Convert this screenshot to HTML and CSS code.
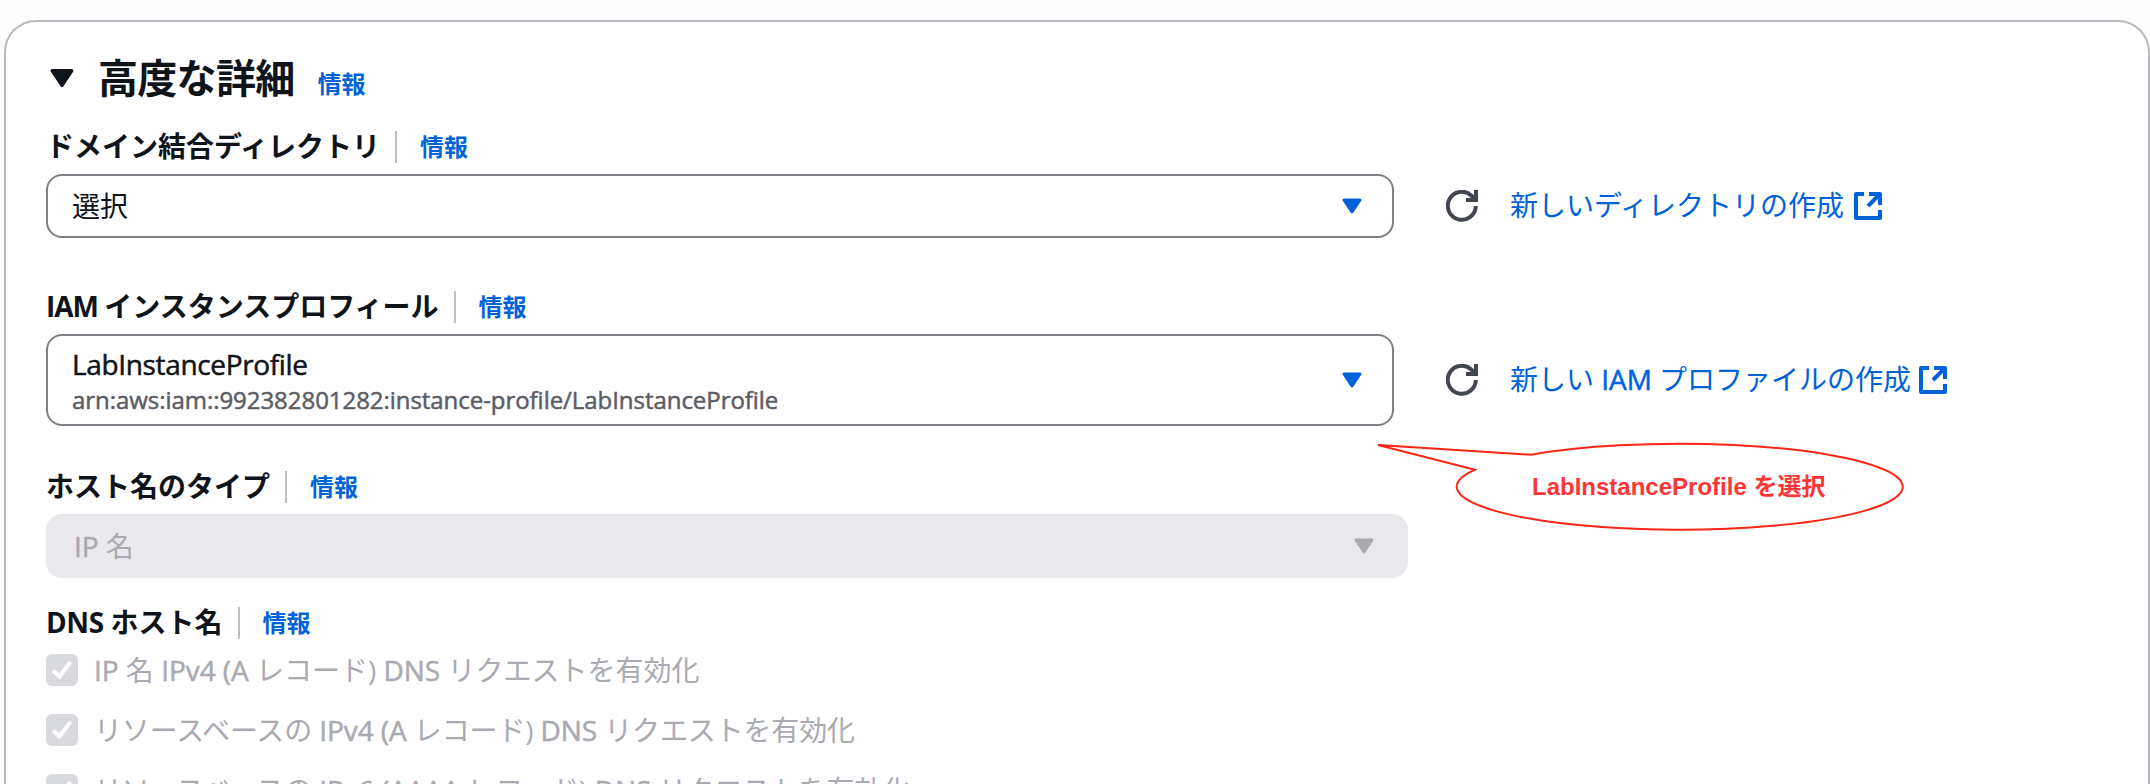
FILE: index.html
```html
<!DOCTYPE html>
<html lang="ja">
<head>
<meta charset="utf-8">
<title>高度な詳細</title>
<link rel="stylesheet" href="styles.css">
</head>
<body>
<svg class="defs" aria-hidden="true">
  <symbol id="caret" viewBox="0 0 20 16"><path d="M2 2h16l-8 12z" fill="currentColor" stroke="currentColor" stroke-width="3" stroke-linejoin="round"/></symbol>
  <symbol id="refresh" viewBox="0 0 16 16"><path d="M14.900 8a7 7 0 1 1-2.400-5.400L15 5M15 0v5h-5" fill="none" stroke="currentColor" stroke-width="2"/></symbol>
  <symbol id="external" viewBox="0 0 28 28"><path d="M10 2H2v24h24v-8M15 2h11v11M26 2L14 14" fill="none" stroke="currentColor" stroke-width="4" stroke-linejoin="round"/></symbol>
  <symbol id="check" viewBox="0 0 32 32"><path d="M7 16.500l6.500 6L24.500 8" fill="none" stroke="currentColor" stroke-width="4"/></symbol>
</svg>
<main class="card">
  <header class="heading">
    <svg class="heading-caret"><use href="#caret"/></svg>
    <h2>高度な詳細</h2>
    <a class="info">情報</a>
  </header>

  <section class="field directory">
    <div class="label"><span class="name">ドメイン結合ディレクトリ</span><a class="info">情報</a></div>
    <div class="row">
      <div class="select"><span>選択</span><svg class="caret"><use href="#caret"/></svg></div>
      <svg class="refresh"><use href="#refresh"/></svg>
      <a class="link"><span>新しいディレクトリの作成</span><svg class="external"><use href="#external"/></svg></a>
    </div>
  </section>

  <section class="field profile">
    <div class="label"><span class="name"><span class="iam">IAM </span>インスタンスプロフィール</span><a class="info">情報</a></div>
    <div class="row">
      <div class="select tall"><div class="option"><span class="option-name">LabInstanceProfile</span><span class="option-arn">arn:aws:iam::992382801282:instance-profile/LabInstanceProfile</span></div><svg class="caret"><use href="#caret"/></svg></div>
      <svg class="refresh"><use href="#refresh"/></svg>
      <a class="link link-profile"><span>新しい <span class="latin">IAM</span> プロファイルの作成</span><svg class="external"><use href="#external"/></svg></a>
    </div>
  </section>

  <section class="field hosttype">
    <div class="label"><span class="name">ホスト名のタイプ</span><a class="info">情報</a></div>
    <div class="select disabled"><span><span class="latin">IP</span> 名</span><svg class="caret"><use href="#caret"/></svg></div>
  </section>

  <section class="field dns">
    <div class="label"><span class="name"><span class="dns-latin">DNS </span>ホスト名</span><a class="info">情報</a></div>
    <div class="checks">
      <div class="check"><svg class="box"><use href="#check"/></svg><span><span class="latin">IP</span> 名 <span class="latin">IPv4 (A</span> レコード) <span class="latin">DNS</span> リクエストを有効化</span></div>
      <div class="check"><svg class="box"><use href="#check"/></svg><span class="resource">リソースベースの <span class="latin">IPv4 (A</span> レコード) <span class="latin">DNS</span> リクエストを有効化</span></div>
      <div class="check"><svg class="box"><use href="#check"/></svg><span><span class="resource">リソースベースの</span> <span class="latin">IPv6 (AAAA</span> レコード) <span class="latin">DNS</span> リクエストを有効化</span></div>
    </div>
  </section>
</main>
<aside class="callout">
  <svg class="bubble" viewBox="0 0 530 92"><path d="M155 12.700 L2 3 L99 27.700 A223 43 0 1 0 155 12.700 Z" fill="#fff" stroke="#ff2414" stroke-width="2"/></svg>
  <span class="callout-text">LabInstanceProfile を選択</span>
</aside>
</body>
</html>
```

FILE: styles.css
```css
* { box-sizing: border-box; }
html, body { margin: 0; height: 784px; overflow: hidden; }
body {
  background: #fcfcfd;
  color: #0f141a;
  font: 28px/40px "Open Sans", "Noto Sans CJK JP", sans-serif;
  padding: 20px 0 0 4px;
  white-space: nowrap;
}
.defs { position: absolute; width: 0; height: 0; }
.card {
  width: 2146px;
  height: 764px;
  overflow: hidden;
  padding: 34px 0 0 40px;
  background: #fff;
  border: 2px solid #b9b9c1;
  border-bottom: 0;
  border-radius: 32px 32px 0 0;
}
.heading { display: flex; height: 48px; align-items: center; }
.heading-caret { width: 24px; height: 20px; margin: -4px 24px 0 4px; }
h2 { margin: -4px 0 0; font-size: 40px; line-height: 48px; font-weight: 700; letter-spacing: -0.7px; }
.info { font-size: 24px; font-weight: 700; color: #0062d9; }
.heading .info { margin: 8px 0 0 23px; }
.label { display: flex; height: 32px; align-items: center; }
.name { font-weight: 700; padding-right: 15px; margin-right: 23px; border-right: 2px solid #bfbfc7; line-height: 30px; height: 32px; }
.iam { letter-spacing: -1px; }
.dns-latin { letter-spacing: -0.4px; }
.latin { letter-spacing: -0.05px; -webkit-text-stroke: 0.5px currentColor; }
.directory { margin-top: 27px; }
.profile { margin-top: 53px; }
.hosttype { margin-top: 45px; }
.dns { margin-top: 29px; }
.row { display: flex; align-items: center; margin-top: 11px; }
.select {
  display: flex;
  align-items: center;
  justify-content: space-between;
  width: 1348px;
  height: 64px;
  padding: 0 30px 0 24px;
  border: 2px solid #7f7f88;
  border-radius: 16px;
}
.tall { height: 92px; }
.caret { width: 20px; height: 16px; color: #0062d9; }
.option { display: flex; flex-direction: column; padding-top: 4px; -webkit-text-stroke: 0.5px currentColor; }
.option-name { line-height: 36px; letter-spacing: -0.35px; }
.option-arn { font-size: 24px; line-height: 36px; letter-spacing: -0.05px; color: #5c5c66; }
.disabled { width: 1362px; margin-top: 11px; padding: 0 34px 0 28px; background: #e9e8ed; border: 0; color: #aaaab2; }
.disabled .caret { color: #aaabb0; }
.refresh { width: 32px; height: 32px; margin-left: 52px; color: #424650; }
.link { display: flex; align-items: center; margin-left: 32px; color: #0062d9; }
.link > span { margin-top: -2px; }
.external { width: 28px; height: 28px; margin-left: 10px; }
.link-profile .external { margin-left: 8px; }
.checks { display: grid; gap: 28px; margin-top: 15px; }
.check { display: flex; align-items: center; height: 32px; color: #aaaab2; }
.resource { letter-spacing: -0.15px; }
.box { width: 32px; height: 32px; margin-right: 16px; border-radius: 6px; background: #d9d9e0; color: #fff; }
.callout { position: absolute; left: 1376px; top: 442px; width: 530px; height: 92px; }
.bubble { position: absolute; left: 0; top: 0; width: 530px; height: 92px; overflow: visible; }
.callout-text {
  position: absolute;
  left: 156px;
  top: 25px;
  font: 700 24px/40px "Liberation Sans", "Noto Sans CJK JP", sans-serif;
  color: #ff3434;
}
```
